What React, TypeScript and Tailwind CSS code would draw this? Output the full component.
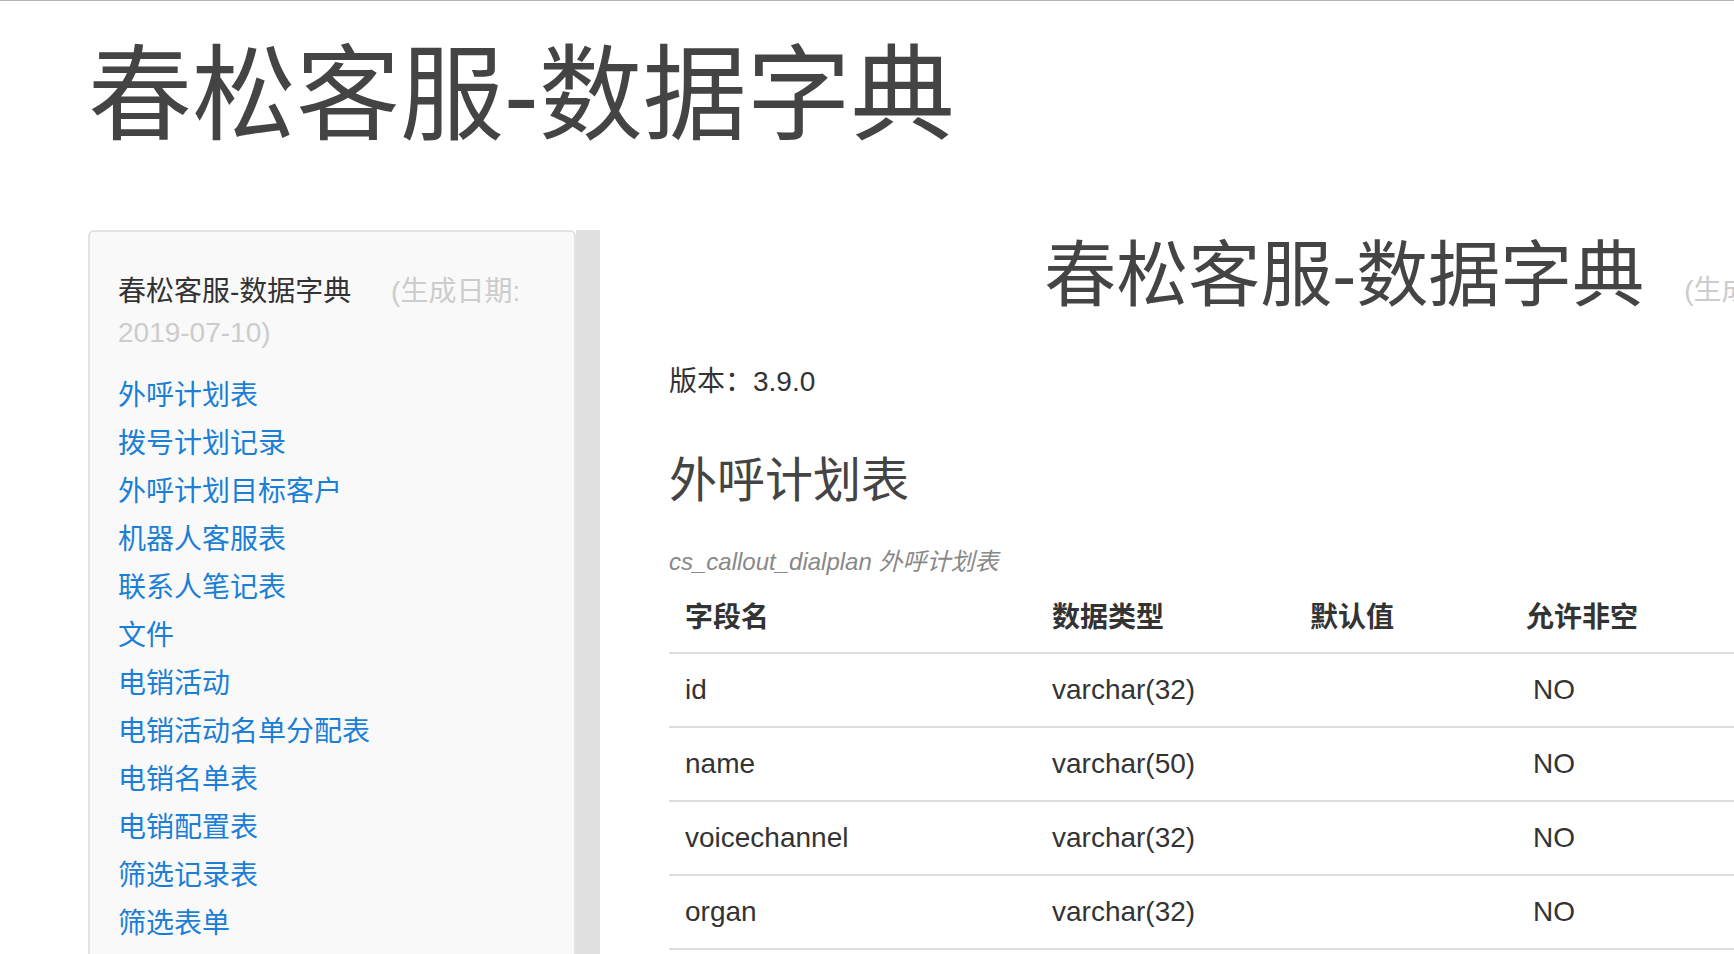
const font = "font-['Liberation_Sans','Noto_Sans_CJK_SC',sans-serif]";

const links = [
  "外呼计划表",
  "拨号计划记录",
  "外呼计划目标客户",
  "机器人客服表",
  "联系人笔记表",
  "文件",
  "电销活动",
  "电销活动名单分配表",
  "电销名单表",
  "电销配置表",
  "筛选记录表",
  "筛选表单",
];

const rows = [
  { name: "id", type: "varchar(32)", def: "", notNull: "NO" },
  { name: "name", type: "varchar(50)", def: "", notNull: "NO" },
  { name: "voicechannel", type: "varchar(32)", def: "", notNull: "NO" },
  { name: "organ", type: "varchar(32)", def: "", notNull: "NO" },
];

export default function App() {
  return (
    <div className={`${font} h-screen w-screen overflow-hidden border-t border-[#b5b5b5] bg-white text-[#333]`}>
      <div className="pl-[88px]">
        <h1 className="mt-[43px] mb-[82px] text-[104px] leading-[104px] font-normal text-[#444] whitespace-nowrap">
          春松客服-数据字典
        </h1>

        <div className="flex items-start">
          {/* sidebar */}
          <div className="flex items-stretch">
            <div className="w-[488px] h-[800px] rounded-[6px] border-2 border-[#e3e3e3] bg-[#f9f9f9] pl-[28px] pr-[28px] pt-[39px]">
              <div className="text-[28px] leading-[41px] text-[#333]">
                春松客服-数据字典
                <span className="ml-[32px] text-[#ccc]"> (生成日期: 2019-07-10)</span>
              </div>
              <ul className="mt-[19px]">
                {links.map((l) => (
                  <li key={l} className="text-[28px] leading-[48px]">
                    <a href="#" className="text-[#1b7fd6]">
                      {l}
                    </a>
                  </li>
                ))}
              </ul>
            </div>
            <div className="w-[24px] h-[800px] bg-[#e1e1e1]" />
          </div>

          {/* main */}
          <div className="ml-[69px] w-[1680px] shrink-0 pt-[5px]">
            <div className="flex h-[80px] items-baseline justify-center whitespace-nowrap leading-none">
              <span className="text-[72px] leading-[80px] text-[#444]">春松客服-数据字典</span>
              <span className="ml-[40px] text-[28px] leading-none text-[#ccc]">(生成日期: 2019-07-10)</span>
            </div>

            <p className="mt-[47px] text-[28px] leading-[40px]">版本：3.9.0</p>

            <h3 className="mt-[52px] text-[48px] leading-[53px] text-[#444]">外呼计划表</h3>

            <div className="mt-[37px] text-[24px] leading-[36px] italic text-[#888]">
              cs_callout_dialplan 外呼计划表
            </div>

            <table className="w-[1680px] table-fixed border-collapse text-left">
              <thead>
                <tr className="text-[28px] leading-[40px]">
                  <th className="w-[367px] border-b-2 border-[#ddd] px-[16px] pt-[18px] pb-[14px] font-bold">字段名</th>
                  <th className="w-[258px] border-b-2 border-[#ddd] px-[16px] pt-[18px] pb-[14px] font-bold">数据类型</th>
                  <th className="w-[216px] border-b-2 border-[#ddd] px-[16px] pt-[18px] pb-[14px] font-bold">默认值</th>
                  <th className="w-[220px] border-b-2 border-[#ddd] px-[16px] pt-[18px] pb-[14px] font-bold">允许非空</th>
                  <th className="border-b-2 border-[#ddd] px-[16px] pt-[18px] pb-[14px] font-bold">备注</th>
                </tr>
              </thead>
              <tbody>
                {rows.map((r) => (
                  <tr key={r.name} className="text-[28px] leading-[40px]">
                    <td className="border-b-2 border-[#ddd] px-[16px] py-[16px]">{r.name}</td>
                    <td className="border-b-2 border-[#ddd] px-[16px] py-[16px]">{r.type}</td>
                    <td className="border-b-2 border-[#ddd] px-[16px] py-[16px]">{r.def}</td>
                    <td className="border-b-2 border-[#ddd] pl-[23px] pr-[16px] py-[16px]">{r.notNull}</td>
                    <td className="border-b-2 border-[#ddd] px-[16px] py-[16px]"></td>
                  </tr>
                ))}
              </tbody>
            </table>
          </div>
        </div>
      </div>
    </div>
  );
}
